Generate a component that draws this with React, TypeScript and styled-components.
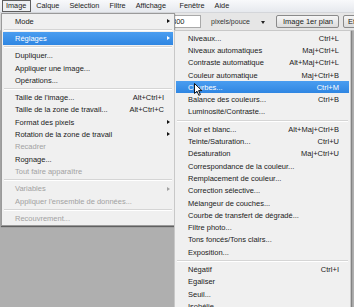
import React from "react";
import styled, { createGlobalStyle } from "styled-components";

const GlobalStyle = createGlobalStyle`
  html, body {
    margin: 0;
    padding: 0;
    background: #afafaf;
    overflow: hidden;
  }
  * {
    box-sizing: border-box;
  }
`;

type Item =
  | { sep: true }
  | {
      label: string;
      shortcut?: string;
      sub?: boolean;
      disabled?: boolean;
      active?: boolean;
    };

const imageMenu: Item[] = [
  { label: "Mode", sub: true },
  { sep: true },
  { label: "Réglages", sub: true, active: true },
  { sep: true },
  { label: "Dupliquer..." },
  { label: "Appliquer une image..." },
  { label: "Opérations..." },
  { sep: true },
  { label: "Taille de l'image...", shortcut: "Alt+Ctrl+I" },
  { label: "Taille de la zone de travail...", shortcut: "Alt+Ctrl+C" },
  { label: "Format des pixels", sub: true },
  { label: "Rotation de la zone de travail", sub: true },
  { label: "Recadrer", disabled: true },
  { label: "Rognage..." },
  { label: "Tout faire apparaître", disabled: true },
  { sep: true },
  { label: "Variables", sub: true, disabled: true },
  { label: "Appliquer l'ensemble de données...", disabled: true },
  { sep: true },
  { label: "Recouvrement...", disabled: true },
];

const reglagesMenu: Item[] = [
  { label: "Niveaux...", shortcut: "Ctrl+L" },
  { label: "Niveaux automatiques", shortcut: "Maj+Ctrl+L" },
  { label: "Contraste automatique", shortcut: "Alt+Maj+Ctrl+L" },
  { label: "Couleur automatique", shortcut: "Maj+Ctrl+B" },
  { label: "Courbes...", shortcut: "Ctrl+M", active: true },
  { label: "Balance des couleurs...", shortcut: "Ctrl+B" },
  { label: "Luminosité/Contraste..." },
  { sep: true },
  { label: "Noir et blanc...", shortcut: "Alt+Maj+Ctrl+B" },
  { label: "Teinte/Saturation...", shortcut: "Ctrl+U" },
  { label: "Désaturation", shortcut: "Maj+Ctrl+U" },
  { label: "Correspondance de la couleur..." },
  { label: "Remplacement de couleur..." },
  { label: "Correction sélective..." },
  { label: "Mélangeur de couches..." },
  { label: "Courbe de transfert de dégradé..." },
  { label: "Filtre photo..." },
  { label: "Tons foncés/Tons clairs..." },
  { label: "Exposition..." },
  { sep: true },
  { label: "Négatif", shortcut: "Ctrl+I" },
  { label: "Egaliser" },
  { label: "Seuil..." },
  { label: "Isohélie..." },
];

const topMenus = ["Image", "Calque", "Sélection", "Filtre", "Affichage", "Fenêtre", "Aide"];

export default function App() {
  return (
    <>
      <GlobalStyle />
      <Screen>
        <MenuBar>
          {topMenus.map((m, i) => (
            <MenuBarItem key={m} $open={i === 0} $spaced={m === "Fenêtre"}>
              {m}
            </MenuBarItem>
          ))}
        </MenuBar>
        <OptionsBar>
          <Field>300</Field>
          <Select>
            pixels/pouce
            <Caret />
          </Select>
          <ToolButton>Image 1er plan</ToolButton>
          <ToolButton $narrow>Effacer</ToolButton>
        </OptionsBar>
        <Workspace />

        <DropMenu $left={1} $top={13} $width={174}>
          {imageMenu.map((it, i) =>
            "sep" in it ? (
              <Separator key={i} />
            ) : (
              <Row key={i} $active={it.active} $disabled={it.disabled} $padRight={9}>
                <span>{it.label}</span>
                <Shortcut>{it.shortcut}</Shortcut>
                {it.sub && <Arrow $active={it.active} $disabled={it.disabled} />}
              </Row>
            )
          )}
        </DropMenu>

        <DropMenu $left={174} $top={30} $width={177} $sub>
          {reglagesMenu.map((it, i) =>
            "sep" in it ? (
              <Separator key={i} />
            ) : (
              <Row key={i} $active={it.active} $disabled={it.disabled} $padRight={10}>
                <span>{it.label}</span>
                <Shortcut>{it.shortcut}</Shortcut>
              </Row>
            )
          )}
        </DropMenu>

        <Cursor width="9" height="13" viewBox="0 0 9 13">
          <path
            d="M0.5 0.5 L0.5 10.5 L3 8.2 L4.8 12.3 L6.4 11.6 L4.6 7.6 L7.8 7.6 Z"
            fill="#fff"
            stroke="#000"
            strokeWidth="0.9"
            strokeLinejoin="round"
          />
        </Cursor>
      </Screen>
    </>
  );
}

const Screen = styled.div`
  position: relative;
  width: 354px;
  height: 307px;
  overflow: hidden;
  display: flex;
  flex-direction: column;
  font-family: "Liberation Sans", Arial, sans-serif;
  font-size: 7.5px;
  color: #1b1b1b;
  background: #afafaf;
`;

const MenuBar = styled.div`
  height: 13px;
  display: flex;
  align-items: center;
  padding-left: 1px;
  background: linear-gradient(#f8f9fb, #e6e9ee);
  border-bottom: 1px solid #d4d6da;
`;

const MenuBarItem = styled.div<{ $open?: boolean; $spaced?: boolean }>`
  height: 12px;
  line-height: 10px;
  padding: 0 3.5px;
  margin: 0 0.5px;
  margin-left: ${(p) => (p.$spaced ? "4px" : "0.5px")};
  font-size: 7.3px;
  border: 1px solid ${(p) => (p.$open ? "#5e5e5e" : "transparent")};
  background: ${(p) => (p.$open ? "#eef0f2" : "transparent")};
  white-space: nowrap;
`;

const OptionsBar = styled.div`
  height: 18px;
  display: flex;
  align-items: center;
  padding-left: 165px;
  overflow: hidden;
  background: #e6e6e6;
  border-bottom: 1px solid #bdbdbd;
`;

const Field = styled.div`
  flex: none;
  width: 36px;
  height: 13px;
  line-height: 11px;
  padding-left: 6px;
  background: #fff;
  border: 1px solid #a9a9a9;
`;

const Select = styled.div`
  flex: none;
  position: relative;
  width: 64px;
  height: 13px;
  line-height: 11px;
  margin-left: 4px;
  padding-left: 5px;
  color: #333;
  font-size: 7px;
  border: 1px solid transparent;
`;

const Caret = styled.span`
  position: absolute;
  right: 3px;
  top: 5px;
  border-left: 2.5px solid transparent;
  border-right: 2.5px solid transparent;
  border-top: 3px solid #222;
`;

const ToolButton = styled.div<{ $narrow?: boolean }>`
  flex: none;
  height: 13px;
  line-height: 11px;
  margin-left: ${(p) => (p.$narrow ? "4px" : "7px")};
  padding: 0 ${(p) => (p.$narrow ? "4px" : "6px")};
  width: ${(p) => (p.$narrow ? "40px" : "63px")};
  white-space: nowrap;
  text-align: ${(p) => (p.$narrow ? "left" : "center")};
  border: 1px solid #8a8a8a;
  border-radius: 2px;
  background: linear-gradient(#f6f6f6, #dcdcdc);
  color: #222;
`;

const Workspace = styled.div`
  flex: 1;
  background: #afafaf;
`;

const DropMenu = styled.div<{ $left: number; $top: number; $width: number; $sub?: boolean }>`
  position: absolute;
  left: ${(p) => p.$left}px;
  top: ${(p) => p.$top}px;
  width: ${(p) => p.$width}px;
  padding: ${(p) => (p.$sub ? "1px 1px 2px" : "1px 1px 1px")};
  background: #f0f0f0;
  border: 1px solid ${(p) => (p.$sub ? "#c8c8c8" : "#9a9a9a")};
  box-shadow: ${(p) => (p.$sub ? "1px 1px 1px rgba(0,0,0,0.25)" : "0 1px 1px rgba(0,0,0,0.45)")};
  z-index: ${(p) => (p.$sub ? 2 : 1)};
`;

const Row = styled.div<{ $active?: boolean; $disabled?: boolean; $padRight: number }>`
  position: relative;
  display: flex;
  justify-content: space-between;
  align-items: center;
  height: 12.3px;
  padding-left: 12px;
  padding-right: ${(p) => p.$padRight}px;
  white-space: nowrap;
  color: ${(p) => (p.$active ? "#fff" : p.$disabled ? "#a2a2a2" : "#1b1b1b")};
  background: ${(p) => (p.$active ? "linear-gradient(#4a9df0, #2f86e2)" : "transparent")};
`;

const Shortcut = styled.span`
  margin-left: 8px;
`;

const Arrow = styled.span<{ $active?: boolean; $disabled?: boolean }>`
  position: absolute;
  right: 3px;
  top: 4px;
  border-top: 2.5px solid transparent;
  border-bottom: 2.5px solid transparent;
  border-left: 3px solid
    ${(p) => (p.$active ? "#fff" : p.$disabled ? "#a2a2a2" : "#111")};
`;

const Separator = styled.div`
  height: 5px;
  margin: 0 1px;
  display: flex;
  flex-direction: column;
  justify-content: center;
  &::before {
    content: "";
    display: block;
    height: 1px;
    background: #d5d5d5;
  }
  &::after {
    content: "";
    display: block;
    height: 1px;
    background: #fff;
  }
`;

const Cursor = styled.svg`
  position: absolute;
  left: 194px;
  top: 83px;
  z-index: 5;
`;
